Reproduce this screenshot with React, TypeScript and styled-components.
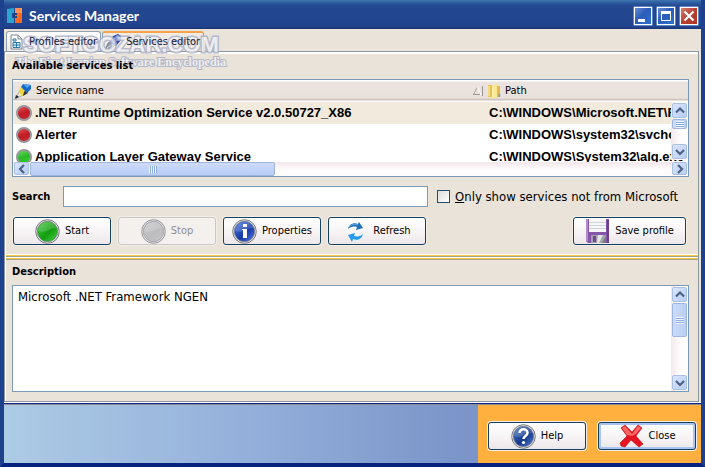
import React, { useState } from "react";
import styled, { createGlobalStyle, css } from "styled-components";

const ui = `"DejaVu Sans Condensed", "DejaVu Sans", "Noto Sans", sans-serif`;
const arial = `"Liberation Sans", Arial, sans-serif`;

const GlobalStyle = createGlobalStyle`
  * { box-sizing: border-box; }
  body { margin: 0; background: #e9e3d9; font: 11px/14px ${ui}; color: #000; }
  button, input, textarea { font: inherit; color: inherit; margin: 0; }
  svg { display: block; flex: none; }
`;

const Frame = styled.div`
  min-height: 100vh;
  display: flex;
  flex-direction: column;
  border: solid #1d418c;
  border-width: 0 4px 4px;
  border-bottom-color: #08237f;
  background: #e9e3d9;
`;

const TitleBar = styled.header`
  height: 29px;
  flex: none;
  display: flex;
  align-items: center;
  gap: 7px;
  padding: 3px 0 0 3px;
  background: linear-gradient(#4277b3, #2b5a9f 3px, #23488f 6px, #22458f 22px, #21428b 27px, #1a3270);
`;

const Title = styled.h1`
  margin: 0;
  flex: 1;
  font: bold 14px/18px Lato, "Noto Sans", sans-serif;
  color: #fff;
`;

const Captions = styled.div`
  display: flex;
  gap: 3px;
  padding-right: 2px;
`;

const CaptionButton = styled.button<{ $close?: boolean }>`
  width: 20px;
  height: 20px;
  padding: 0;
  border: 1px solid #5f86c6;
  border-radius: 1px;
  box-shadow: inset 0 0 0 1px #fff;
  display: grid;
  place-items: center;
  background: ${(p) =>
    p.$close
      ? "linear-gradient(135deg, #d9867a, #b8402f 50%, #a93424)"
      : "linear-gradient(135deg, #7394d9, #2c5cb9 45%, #2b74cf)"};
`;

const Strip = styled.div`
  position: relative;
  flex: none;
  display: flex;
  gap: 1px;
  height: 22px;
  padding: 2px 2px 0;
`;

const Tab = styled.button<{ $active?: boolean }>`
  display: flex;
  align-items: center;
  gap: 6px;
  height: 20px;
  padding: 0 3px;
  border: 1px solid #91a3b3;
  border-bottom: 0;
  border-radius: 3px 3px 0 0;
  background: linear-gradient(#fff, #eee9e5);
  white-space: nowrap;
  ${(p) =>
    p.$active &&
    css`
      border-top: 2px solid #f5a44a;
      background: #f0ebe5;
      gap: 4px;
      padding-left: 1px;
    `}
`;

const TabLabel = styled.span`
  position: relative;
  z-index: 2;
  color: #1c2038;
`;

const Watermark = styled.div`
  position: absolute;
  z-index: 1;
  left: 10px;
  top: 6px;
  width: 214px;
  display: flex;
  flex-direction: column;
  align-items: center;
  pointer-events: none;
  white-space: nowrap;
  color: #f1f0f2;
  -webkit-text-stroke: 3px #a9aec4;
  paint-order: stroke fill;
  opacity: 0.8;
`;

const WatermarkName = styled.div`
  font: bold 22px/19px ${arial};
`;

const WatermarkLine = styled.div`
  font: bold 12px/16px "Liberation Serif", serif;
  -webkit-text-stroke-width: 2px;
`;

const Panel = styled.main`
  flex: 1;
  display: flex;
  flex-direction: column;
  margin-right: 2px;
  border: 1px solid #8b97a3;
  box-shadow: inset 1px 2px #fff;
`;

const Section = styled.section<{ $grow?: boolean }>`
  display: flex;
  flex-direction: column;
  padding: ${(p) => (p.$grow ? "5px 9px 9px 7px" : "7px 9px 9px 7px")};
  ${(p) => p.$grow && "flex: 1;"}
`;

const Heading = styled.h2`
  position: relative;
  z-index: 2;
  margin: 0 0 6px;
  font: bold 11px/14px ${ui};
`;

const ListBox = styled.div`
  position: relative;
  border: 1px solid #7c99b5;
  background: #fff;
`;

const ListView = styled.div`
  height: 82px;
  overflow: hidden;
`;

const Table = styled.table`
  width: 100%;
  min-width: 675px;
  table-layout: fixed;
  border-collapse: collapse;
  white-space: nowrap;

  th {
    height: 22px;
    padding: 0 2px;
    background: linear-gradient(#fff 1px, #ebe3df 2px, #e9e1dc 18px, #c9bdb5 20px, #fff 21px);
    font-weight: normal;
    text-align: left;
  }
  td {
    height: 22px;
    padding: 0 3px;
    font: bold 13px/20px ${arial};
  }
  td:last-child { padding-left: 4px; }
  col:first-child { width: 472px; }
`;

const Row = styled.tr<{ $selected?: boolean }>`
  background: ${(p) => (p.$selected ? "#f2ebdd" : "#fff")};
`;

const Cell = styled.div<{ $gap?: number }>`
  display: flex;
  align-items: center;
  gap: ${(p) => p.$gap ?? 3}px;
`;

const Sort = styled.span`
  margin-left: auto;
`;

const Dot = styled.span<{ $on?: boolean }>`
  width: 16px;
  height: 16px;
  flex: none;
  border-radius: 50%;
  border: 2px solid #98979b;
  background: ${(p) =>
    p.$on
      ? "linear-gradient(160deg, #62dc55, #29b929 50%, #36cf30)"
      : "linear-gradient(160deg, #e35555, #bf1c25 50%, #cc2b31)"};
`;

const ScrollTrack = styled.div<{ $across?: boolean }>`
  display: flex;
  flex-direction: ${(p) => (p.$across ? "row" : "column")};
  ${(p) => (p.$across ? "height: 14px;" : "width: 17px;")}
  background: ${(p) =>
    p.$across ? "linear-gradient(#f3e7ea, #fffcfd 8px)" : "linear-gradient(90deg, #f3e9ec, #fffcfd 9px)"};
`;

const ListScroll = styled(ScrollTrack)`
  position: absolute;
  right: 0;
  top: 22px;
  height: 58px;
`;

const ScrollButton = styled.button`
  flex: none;
  display: grid;
  place-items: center;
  width: 15px;
  height: 15px;
  margin: 1px;
  padding: 0;
  border: 1px solid #a9c1e3;
  border-radius: 2px;
  background: linear-gradient(135deg, #dae5fc, #b9cdf3);

  ${ScrollTrack}[data-across] & { height: 13px; margin: 0 1px; }
`;

const Thumb = styled.div<{ $length: number; $across?: boolean }>`
  display: grid;
  place-items: center;
  border: 1px solid #9eb6dc;
  border-radius: 2px;
  ${(p) =>
    p.$across
      ? css`
          width: ${p.$length}px;
          background: linear-gradient(#cedbfa, #b7ccf5);
        `
      : css`
          height: ${p.$length}px;
          margin: 0 1px;
          background: linear-gradient(90deg, #ccdafa, #bacff7);
        `}
`;

const Grip = styled.span<{ $across?: boolean }>`
  width: 8px;
  height: 7px;
  background: repeating-linear-gradient(
    ${(p) => (p.$across ? "90deg" : "180deg")},
    #eef4fe 0 1px,
    #8faee0 1px 2px
  );
`;

const Spacer = styled.div`
  flex: 1;
`;

const SearchRow = styled.div`
  display: flex;
  align-items: center;
  margin-top: 9px;
`;

const SearchLabel = styled.label`
  width: 51px;
  font-weight: bold;
`;

const SearchInput = styled.input`
  flex: 1;
  min-width: 80px;
  height: 21px;
  padding: 2px 4px;
  border: 1px solid #7c99b5;
  background: #fff;
`;

const CheckLabel = styled.label`
  display: flex;
  align-items: center;
  gap: 5px;
  width: 261px;
  padding-left: 9px;
  font-size: 13px;
  line-height: 16px;
  white-space: nowrap;
`;

const CheckBox = styled.input`
  appearance: none;
  flex: none;
  width: 13px;
  height: 13px;
  border: 1px solid #1c4d75;
  background: linear-gradient(135deg, #dcdcdc, #fff);
  &:checked { background: #21a121; }
`;

const Buttons = styled.div`
  display: flex;
  gap: 7px;
  margin: 10px 3px 0 1px;
`;

const ActionButton = styled.button<{ $wide?: boolean; $focus?: boolean }>`
  display: flex;
  align-items: center;
  justify-content: center;
  gap: 5px;
  flex: none;
  width: ${(p) => (p.$wide ? 113 : 98)}px;
  height: 28px;
  padding: 0;
  border: 1px solid #16405f;
  border-radius: 3px;
  background: linear-gradient(#fff, #f6f2f3 60%, #ebe7ea);
  font: 11px/14px ${ui};
  box-shadow: 0 0 0 1px #f3eee8
    ${(p) => p.$focus && ", inset 0 0 0 2px #a9c4f0"};
  &:disabled {
    border-color: #cbc7c4;
    background: #f3f0ee;
    color: #8f8d90;
  }
  &:disabled svg { opacity: 0.75; }
`;

const Splitter = styled.div`
  height: 6px;
  margin: 0 0 0 1px;
  background: linear-gradient(
    #fff 0 1px, #f6cb45 1px 2px, #a5a18f 2px 3px, #fff 3px 4px, #f7c631 4px 5px, #a5a18f 5px
  );
`;

const MemoBox = styled.div`
  flex: 1;
  display: flex;
  min-height: 107px;
  border: 1px solid #7c99b5;
  background: #fff;
`;

const Memo = styled.textarea`
  flex: 1;
  min-width: 0;
  padding: 3px 5px;
  border: 0;
  outline: 0;
  resize: none;
  overflow: hidden;
  background: transparent;
  font-size: 13px;
  line-height: 16px;
`;

const Footer = styled.footer`
  flex: none;
  display: flex;
  height: 61px;
  border-top: 1px solid #fff;
  box-shadow: inset 0 1px #10258a, inset 0 2px #8b8d8c;
  background: linear-gradient(90deg, #accbe4, #96b2dc 32%, #8099cc 60%, #667fbd);
`;

const FooterActions = styled.div`
  display: flex;
  gap: 12px;
  margin: 2px 0 0 auto;
  padding: 17px 5px 0 10px;
  background: #ffb03f;
`;

type Dir = "up" | "down" | "left" | "right";
const arrows: Record<Dir, string> = {
  up: "M1 6.5 5 2.5 9 6.5",
  down: "M1 3 5 7 9 3",
  left: "M7 1 3 5 7 9",
  right: "M3 1 7 5 3 9",
};

const Arrow = ({ dir, label }: { dir: Dir; label: string }) => (
  <ScrollButton aria-label={label}>
    <svg width="10" height="10" viewBox="0 0 10 10" fill="none" stroke="#4b6287" strokeWidth="2.2">
      <path d={arrows[dir]} />
    </svg>
  </ScrollButton>
);

const AppIcon = () => (
  <svg width="15" height="16" viewBox="0 0 15 16">
    <path d="M0 1 7 0v5H5v5h2v5H0z" fill="#2ba4ce" />
    <path d="M8 0h7v15H8v-5h2V5H8z" fill="#ff6a22" />
    <path d="M8 0h7v5H8z" fill="#ff9150" />
    <path d="M5 5h5v5H5z" fill="#21458c" />
    <path d="M8 7h3v1H8z" fill="#ff6a22" />
  </svg>
);

const SheetIcon = () => (
  <svg width="13" height="16" viewBox="0 0 13 16">
    <path d="M1 1h7l4 4v10H1z" fill="#fff" stroke="#7b8590" />
    <path d="M8 1v4h4" fill="none" stroke="#7b8590" />
    <path d="M3 5h3v2H3zM3 8.500h7v5H3zM6.500 8.500v5M3 11h7" fill="#dceef9" stroke="#2e79ab" />
  </svg>
);

const PenIcon = () => (
  <svg width="18" height="17" viewBox="0 0 18 17">
    <path d="M1 16 4 9l5-2 2 4-4 4z" fill="#8e98a8" stroke="#59616d" strokeWidth=".6" />
    <path d="m2 15 6-5" stroke="#e8edf2" />
    <path d="M6 7 9 2l5-2 3 2v4l-5 6-3-1z" fill="#2249b5" />
    <path d="m10 3 4-2 1 1-5 5z" fill="#6489e0" />
  </svg>
);

const PencilIcon = () => (
  <svg width="17" height="17" viewBox="0 0 17 17">
    <path d="m1 15 4-8 4 5z" fill="#efe4bd" stroke="#777" strokeWidth=".5" />
    <path d="m4 8 2-4 6 6-5 3z" fill="#f2d338" />
    <path d="m8 13 5-3-2-3-2 2z" fill="#333" />
    <path d="M6 4 8 1l8 1v4l-4 4z" fill="#1769c6" />
    <path d="m8 1 8 1-4 3z" fill="#54a7ed" />
    <path d="m0 16 1-4 3 2z" fill="#16213a" />
  </svg>
);

const FolderIcon = () => (
  <svg width="14" height="16" viewBox="0 0 14 16">
    <path d="M1 2h5v12H1z" fill="#e6c254" />
    <path d="m5 2 5-1v13l-5 2z" fill="#f9e795" />
    <path d="M10 3h3v11h-3z" fill="#e3bb47" />
    <path d="M2 3v10M6 3v11" stroke="#fff3bb" />
    <path d="M12.500 11v3" stroke="#54a5d9" strokeWidth="1.500" />
  </svg>
);

const SortIcon = () => (
  <svg width="10" height="10" viewBox="0 0 10 10" fill="none">
    <path d="M.5 8.500 4.500 1" stroke="#a9a19a" />
    <path d="M4.500 1 8 8.500H1" stroke="#fff" />
    <path d="M9.500 0v10M0 8.500h7" stroke="#9b9690" />
  </svg>
);

const Orb = ({ id, light, dark, children }: { id: string; light: string; dark: string; children?: React.ReactNode }) => (
  <svg width="25" height="25" viewBox="0 0 25 25">
    <defs>
      <linearGradient id={id} x1="0" y1="0" x2="1" y2="1">
        <stop offset="0" stopColor={light} />
        <stop offset=".55" stopColor={dark} />
        <stop offset="1" stopColor={light} />
      </linearGradient>
    </defs>
    <circle cx="12.500" cy="12.500" r="11.800" fill="#e8e8ea" stroke="#77777b" />
    <circle cx="12.500" cy="12.500" r="10.200" fill={`url(#${id})`} stroke="#737580" strokeWidth=".7" />
    <path d="M3 12C4 6 8 3 13 3s8 3 9 6c-6-1-12 6-19 3" fill="#fff" opacity=".17" />
    {children}
  </svg>
);

const RefreshIcon = () => (
  <svg width="25" height="25" viewBox="0 0 25 25">
    <path d="M5 10C6 5 11 3 15 5l1-2 4 6-7 2 1-3c-4-1-7 0-9 2" fill="#1d70b9" />
    <path d="M20 15c-1 5-6 7-10 5l-1 3-4-7 7-2-1 3c4 1 7 0 9-2" fill="#239bea" />
    <path d="M6 8c3-3 6-3 9-2" fill="none" stroke="#62abe4" />
  </svg>
);

const FloppyIcon = () => (
  <svg width="25" height="25" viewBox="0 0 25 25">
    <path d="M1 0h23v24H3l-2-2z" fill="#8555aa" />
    <path d="M1 0h2v22H1z" fill="#b58acb" />
    <path d="M22 1h2v23h-2z" fill="#68408d" />
    <path d="M4 0h17v13H4z" fill="#f7f7fa" />
    <path d="M4 3.500h17M4 6.500h17M4 9.500h17" stroke="#cbd4dc" />
    <path d="M6 16h15v8H6z" fill="#a3a2aa" />
    <path d="M8 17h3v6H8z" fill="#704794" />
    <path d="M13 16h5l-4 8h-2z" fill="#e6e6e9" />
    <path d="M17 24h4v-7z" fill="#777981" />
  </svg>
);

const CrossIcon = () => (
  <svg width="25" height="25" viewBox="0 0 25 25">
    <path
      d="M2 4 6 1l7 7 6-7 4 3-6 8 7 8-4 3-8-7-6 7-4-1-1-3 7-7z"
      fill="#e51420"
      stroke="#b70d18"
      strokeWidth=".6"
    />
    <path d="m3 4 3-2 7 8 6-8 3 2-5 6-4 2-5-1z" fill="#ff827a" opacity=".75" />
  </svg>
);

const services = [
  { name: ".NET Runtime Optimization Service v2.0.50727_X86", path: "C:\\WINDOWS\\Microsoft.NET\\Framework" },
  { name: "Alerter", path: "C:\\WINDOWS\\system32\\svchost.exe" },
  { name: "Application Layer Gateway Service", path: "C:\\WINDOWS\\System32\\alg.exe", on: true },
];

export default function App() {
  const [query, setQuery] = useState("");
  return (
    <>
      <GlobalStyle />
      <Frame>
        <TitleBar>
          <AppIcon />
          <Title>Services Manager</Title>
          <Captions>
            <CaptionButton aria-label="Minimize">
              <svg width="14" height="14"><path d="M2 11.500h7" stroke="#fff" strokeWidth="3" /></svg>
            </CaptionButton>
            <CaptionButton aria-label="Maximize">
              <svg width="14" height="14" fill="none" stroke="#fff">
                <path d="M2.500 3.500h9v8h-9z" />
                <path d="M2 3.500h10" strokeWidth="3" />
              </svg>
            </CaptionButton>
            <CaptionButton $close aria-label="Close window">
              <svg width="14" height="14"><path d="m2.500 2.500 9 9m0-9-9 9" stroke="#fff" strokeWidth="2.200" /></svg>
            </CaptionButton>
          </Captions>
        </TitleBar>

        <Strip role="tablist">
          <Tab role="tab" aria-selected={false}><SheetIcon /><TabLabel>Profiles editor</TabLabel></Tab>
          <Tab role="tab" aria-selected $active><PenIcon /><TabLabel>Services editor</TabLabel></Tab>
          <Watermark>
            <WatermarkName>SOFTGOZAR.COM</WatermarkName>
            <WatermarkLine>The First Iranian Software Encyclopedia</WatermarkLine>
          </Watermark>
        </Strip>

        <Panel>
          <Section>
            <Heading>Available services list</Heading>
            <ListBox>
              <ListView>
                <Table>
                  <colgroup><col /><col /></colgroup>
                  <thead>
                    <tr>
                      <th><Cell $gap={4}><PencilIcon />Service name<Sort><SortIcon /></Sort></Cell></th>
                      <th><Cell $gap={4}><FolderIcon />Path</Cell></th>
                    </tr>
                  </thead>
                  <tbody>
                    {services.map((s, i) => (
                      <Row key={s.name} $selected={i === 0}>
                        <td><Cell><Dot $on={s.on} />{s.name}</Cell></td>
                        <td>{s.path}</td>
                      </Row>
                    ))}
                  </tbody>
                </Table>
              </ListView>
              <ListScroll>
                <Arrow dir="up" label="Scroll list up" />
                <Thumb $length={10}><Grip /></Thumb>
                <Spacer />
                <Arrow dir="down" label="Scroll list down" />
              </ListScroll>
              <ScrollTrack $across data-across>
                <Arrow dir="left" label="Scroll list left" />
                <Thumb $across $length={245}><Grip $across /></Thumb>
                <Spacer />
                <Arrow dir="right" label="Scroll list right" />
              </ScrollTrack>
            </ListBox>

            <SearchRow>
              <SearchLabel htmlFor="search">Search</SearchLabel>
              <SearchInput id="search" value={query} onChange={(e) => setQuery(e.target.value)} />
              <CheckLabel>
                <CheckBox type="checkbox" />
                <span><u>O</u>nly show services not from Microsoft</span>
              </CheckLabel>
            </SearchRow>

            <Buttons>
              <ActionButton><Orb id="green" light="#4bd044" dark="#129c10" />Start</ActionButton>
              <ActionButton disabled><Orb id="gray" light="#bdbdc1" dark="#aaaaae" />Stop</ActionButton>
              <ActionButton>
                <Orb id="blue" light="#4e7de3" dark="#1739a8">
                  <path d="M10 10h5v9h-4v-8h-1zM11 5h4v3h-4z" fill="#fff" />
                </Orb>
                Properties
              </ActionButton>
              <ActionButton><RefreshIcon />Refresh</ActionButton>
              <Spacer />
              <ActionButton $wide><FloppyIcon />Save profile</ActionButton>
            </Buttons>
          </Section>

          <Splitter />

          <Section $grow>
            <Heading id="description">Description</Heading>
            <MemoBox>
              <Memo aria-labelledby="description" defaultValue="Microsoft .NET Framework NGEN" />
              <ScrollTrack>
                <Arrow dir="up" label="Scroll description up" />
                <Thumb $length={34}><Grip /></Thumb>
                <Spacer />
                <Arrow dir="down" label="Scroll description down" />
              </ScrollTrack>
            </MemoBox>
          </Section>
        </Panel>

        <Footer>
          <FooterActions>
            <ActionButton>
              <Orb id="navy" light="#4f7ed0" dark="#17388c">
                <path
                  d="M8.500 9c0-5 8-5 8 0 0 3-4 3-4 6"
                  fill="none"
                  stroke="#fff"
                  strokeWidth="2.500"
                />
                <circle cx="12.500" cy="18.500" r="1.600" fill="#fff" />
              </Orb>
              Help
            </ActionButton>
            <ActionButton $focus><CrossIcon />Close</ActionButton>
          </FooterActions>
        </Footer>
      </Frame>
    </>
  );
}
